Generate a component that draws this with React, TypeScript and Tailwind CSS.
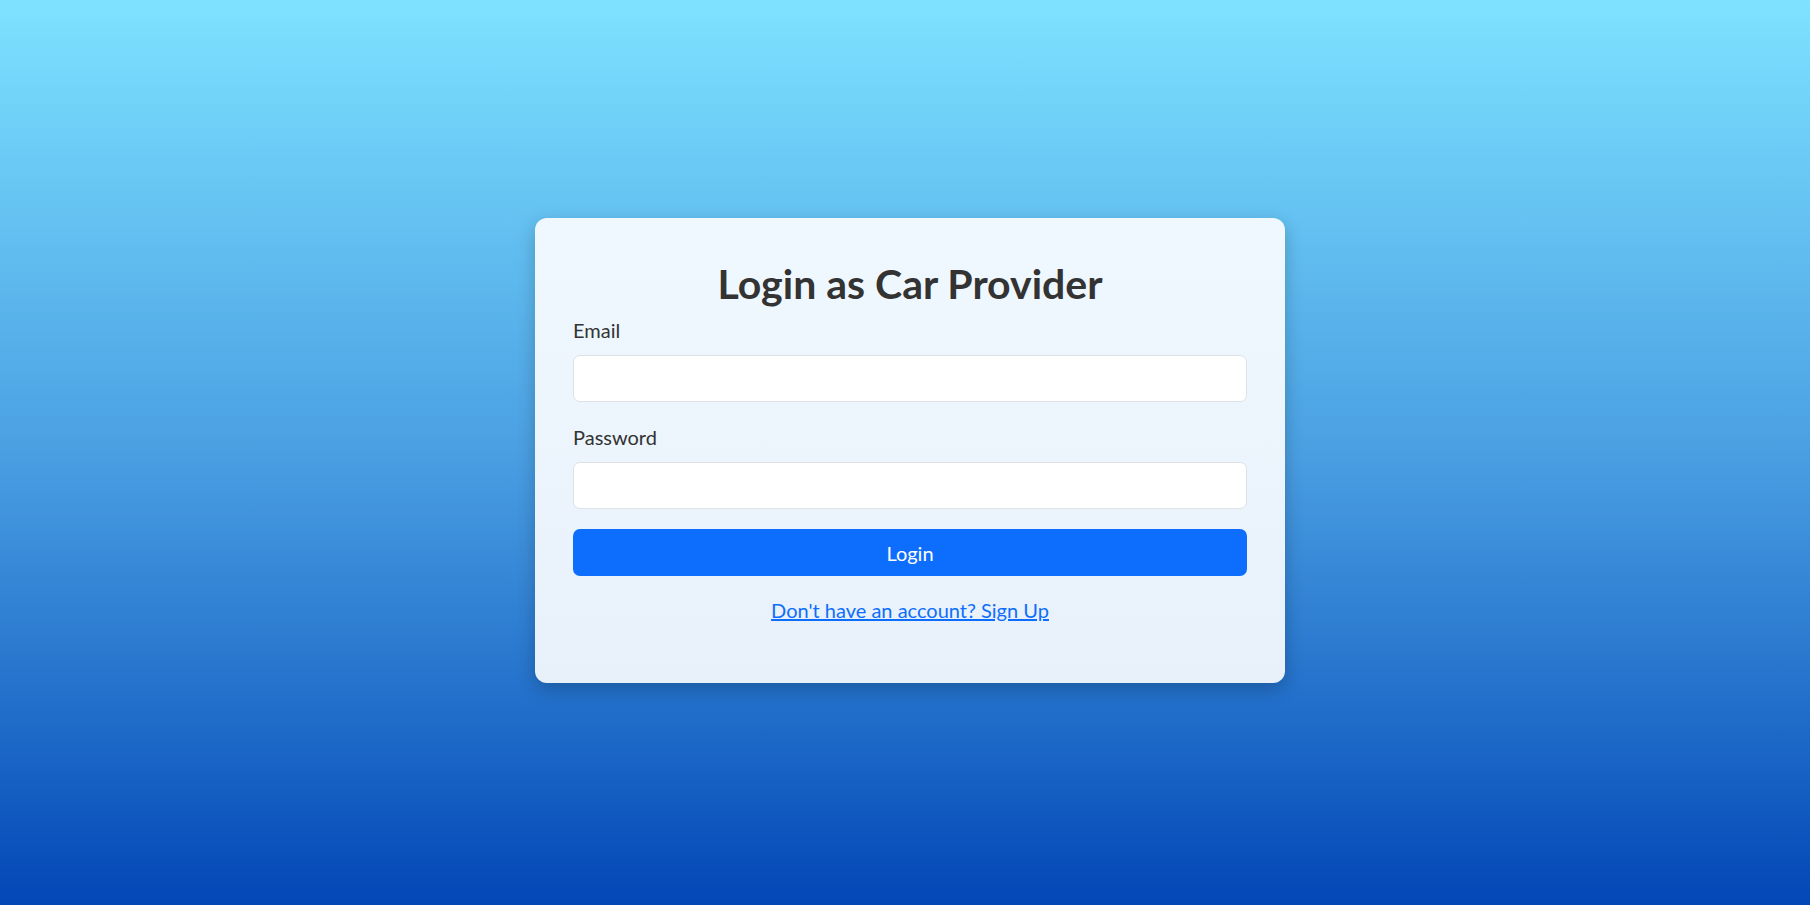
export default function App() {
  return (
    <div
      className="min-h-screen w-full flex items-center justify-center pl-[10px] pb-[4px] bg-gradient-to-b from-[#7ee2ff] via-[#4a9fe2] to-[#0446b6]"
      style={{ fontFamily: 'Lato, "Liberation Sans", sans-serif' }}
    >
      <div className="w-[750px] rounded-xl bg-gradient-to-b from-[#f0f8ff] to-[#e8f0fa] px-[38px] pt-[41px] pb-[42px] shadow-[0_6px_18px_rgba(0,0,0,0.22)]">
        <h2 className="text-center text-[41px] font-bold leading-[1.2] text-[#333] mb-[7px]">
          Login as Car Provider
        </h2>
        <form onSubmit={(e) => e.preventDefault()}>
          <div className="mb-5">
            <label className="block text-[20px] leading-[30px] text-[#333] mb-[10px]">Email</label>
            <input
              type="email"
              className="block w-full h-[47px] rounded-[7px] border border-[#dee2e6] bg-white px-4 text-[20px] outline-none"
            />
          </div>
          <div className="mb-5">
            <label className="block text-[20px] leading-[30px] text-[#333] mb-[10px]">Password</label>
            <input
              type="password"
              className="block w-full h-[47px] rounded-[7px] border border-[#dee2e6] bg-white px-4 text-[20px] outline-none"
            />
          </div>
          <button
            type="submit"
            className="block w-full h-[47px] rounded-[7px] bg-[#0d6efd] text-white text-[20px] leading-[30px]"
          >
            Login
          </button>
        </form>
        <p className="mt-[19px] mb-4 text-center text-[20px] leading-[30px]">
          <a href="#" className="text-[#0d6efd] underline">
            Don't have an account? Sign Up
          </a>
        </p>
      </div>
    </div>
  )
}
